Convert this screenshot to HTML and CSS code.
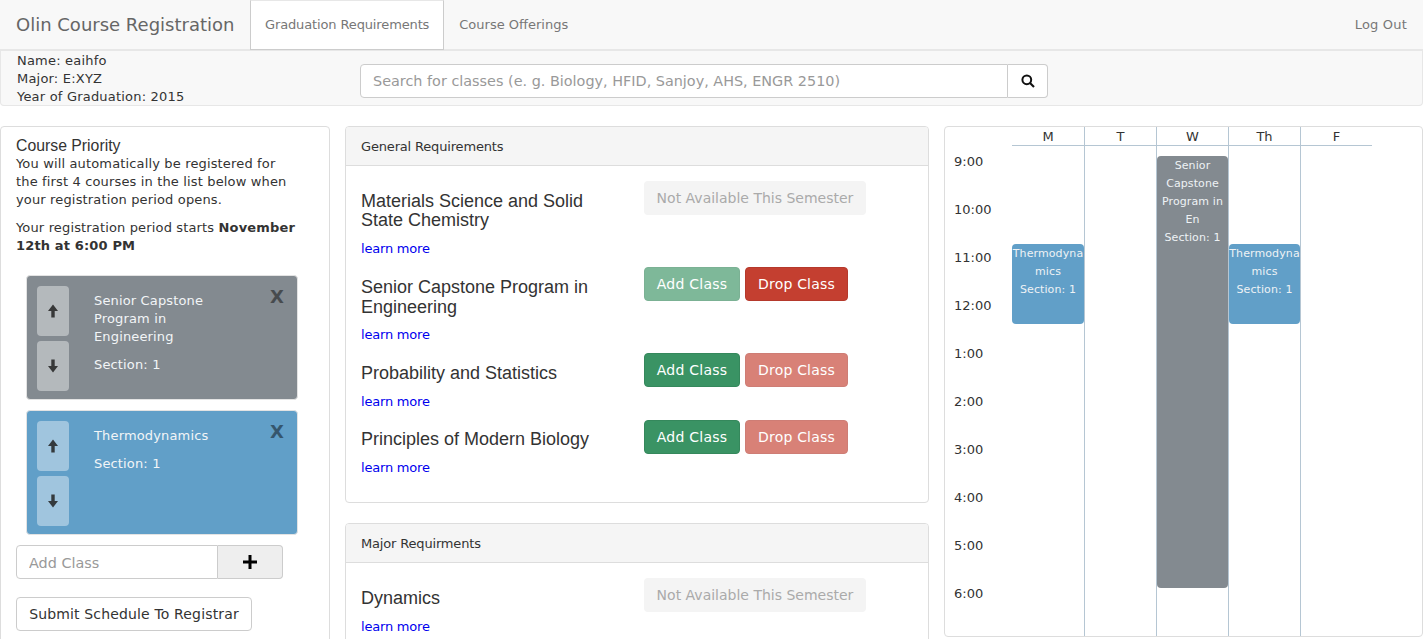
FILE: index.html
```html
<!DOCTYPE html>
<html lang="en">
<head>
    <meta charset="UTF-8">
    <meta name="viewport" content="width=device-width, initial-scale=1.0">
    <title>Olin Course Registration</title>
    <link rel="stylesheet" href="styles.css">
</head>
<body>
    <nav class="navbar">
        <span class="brand">Olin Course Registration</span>
        <a class="nav-link active">Graduation Requirements</a>
        <a class="nav-link">Course Offerings</a>
        <a class="nav-link logout">Log Out</a>
    </nav>

    <div class="info-bar">
        <div class="student">
            <div>Name: eaihfo</div>
            <div>Major: E:XYZ</div>
            <div>Year of Graduation: 2015</div>
        </div>
        <div class="search">
            <input class="search-input" placeholder="Search for classes (e. g. Biology, HFID, Sanjoy, AHS, ENGR 2510)">
            <button class="search-btn">
                <svg width="14" height="14" viewBox="0 0 14 14"><circle cx="5.8" cy="5.8" r="4.4" fill="none" stroke="#111" stroke-width="2"/><path d="M9 9l4 4" stroke="#111" stroke-width="2.2"/></svg>
            </button>
        </div>
    </div>

    <div class="main">
        <section class="panel priority">
            <h3>Course Priority</h3>
            <p>You will automatically be registered for the first 4 courses in the list below when your registration period opens.</p>
            <p>Your registration period starts <b>November 12th at 6:00 PM</b></p>

            <div class="course-card gray">
                <div class="move-btns">
                    <button class="move-btn"><svg width="12" height="14" viewBox="0 0 12 14"><path d="M6 .5L11 7H7.700v6.500H4.300V7H1z"/></svg></button>
                    <button class="move-btn"><svg width="12" height="14" viewBox="0 0 12 14"><path d="M6 13.500L1 7h3.300V.5h3.400V7H11z"/></svg></button>
                </div>
                <div class="course-text">
                    <p>Senior Capstone Program in Engineering</p>
                    <p>Section: 1</p>
                </div>
                <span class="close">X</span>
            </div>

            <div class="course-card blue">
                <div class="move-btns">
                    <button class="move-btn"><svg width="12" height="14" viewBox="0 0 12 14"><path d="M6 .5L11 7H7.700v6.500H4.300V7H1z"/></svg></button>
                    <button class="move-btn"><svg width="12" height="14" viewBox="0 0 12 14"><path d="M6 13.500L1 7h3.300V.5h3.400V7H11z"/></svg></button>
                </div>
                <div class="course-text">
                    <p>Thermodynamics</p>
                    <p>Section: 1</p>
                </div>
                <span class="close">X</span>
            </div>

            <div class="add-class">
                <input class="add-input" placeholder="Add Class">
                <span class="add-addon"><svg width="14" height="14" viewBox="0 0 14 14"><path d="M5.500 0h3v5.500H14v3H8.500V14h-3V8.500H0v-3h5.500z"/></svg></span>
            </div>
            <button class="btn submit">Submit Schedule To Registrar</button>
        </section>

        <div class="requirements">
            <section class="panel req-panel">
                <div class="panel-heading">General Requirements</div>
                <div class="panel-body">
                    <div class="req-row">
                        <div class="req-info">
                            <h4>Materials Science and Solid State Chemistry</h4>
                            <a class="learn">learn more</a>
                        </div>
                        <div class="req-actions"><button class="btn na">Not Available This Semester</button></div>
                    </div>
                    <div class="req-row">
                        <div class="req-info">
                            <h4>Senior Capstone Program in Engineering</h4>
                            <a class="learn">learn more</a>
                        </div>
                        <div class="req-actions">
                            <button class="btn add faded">Add Class</button>
                            <button class="btn drop">Drop Class</button>
                        </div>
                    </div>
                    <div class="req-row">
                        <div class="req-info">
                            <h4>Probability and Statistics</h4>
                            <a class="learn">learn more</a>
                        </div>
                        <div class="req-actions">
                            <button class="btn add">Add Class</button>
                            <button class="btn drop faded">Drop Class</button>
                        </div>
                    </div>
                    <div class="req-row">
                        <div class="req-info">
                            <h4>Principles of Modern Biology</h4>
                            <a class="learn">learn more</a>
                        </div>
                        <div class="req-actions">
                            <button class="btn add">Add Class</button>
                            <button class="btn drop faded">Drop Class</button>
                        </div>
                    </div>
                </div>
            </section>

            <section class="panel req-panel">
                <div class="panel-heading">Major Requirments</div>
                <div class="panel-body">
                    <div class="req-row">
                        <div class="req-info">
                            <h4>Dynamics</h4>
                            <a class="learn">learn more</a>
                        </div>
                        <div class="req-actions"><button class="btn na">Not Available This Semester</button></div>
                    </div>
                </div>
            </section>
        </div>

        <section class="panel calendar">
            <div class="times">
                <div>9:00</div>
                <div>10:00</div>
                <div>11:00</div>
                <div>12:00</div>
                <div>1:00</div>
                <div>2:00</div>
                <div>3:00</div>
                <div>4:00</div>
                <div>5:00</div>
                <div>6:00</div>
            </div>
            <div class="day">
                <div class="day-name">M</div>
                <div class="event blue ev-thermo">Thermodynamics<br>Section: 1</div>
            </div>
            <div class="day">
                <div class="day-name">T</div>
            </div>
            <div class="day">
                <div class="day-name">W</div>
                <div class="event gray ev-capstone">Senior Capstone Program in En<br>Section: 1</div>
            </div>
            <div class="day">
                <div class="day-name">Th</div>
                <div class="event blue ev-thermo">Thermodynamics<br>Section: 1</div>
            </div>
            <div class="day last">
                <div class="day-name">F</div>
            </div>
        </section>
    </div>
</body>
</html>
```

FILE: styles.css
```css
* {
    box-sizing: border-box;
}
html, body {
    height: 100vh;
    overflow: hidden;
}
body {
    margin: 0;
    font-family: "DejaVu Sans", Verdana, sans-serif;
    font-size: 13px;
    line-height: 18px;
    color: #333;
    background-color: #fff;
}
p {
    margin: 0 0 10px;
}
button, input {
    font-family: inherit;
}

/* top bar */
.navbar {
    display: flex;
    height: 51px;
    background-color: #f8f8f8;
    border-bottom: 2px solid #e7e7e7;
}
.brand {
    padding: 0 15px 0 16px;
    font-size: 18px;
    line-height: 49px;
    color: #666;
    width: 250px;
    white-space: nowrap;
}
.nav-link {
    padding: 0 15px;
    line-height: 49px;
    color: #777;
}
.nav-link.active {
    height: 50px;
    padding: 0 14px;
    background-color: #fff;
    border: 1px solid #ccc;
    border-top-color: #e7e7e7;
    line-height: 47px;
    letter-spacing: -0.13px;
}
.logout {
    margin-left: auto;
    padding-right: 16px;
    letter-spacing: 0.2px;
}

.info-bar {
    display: flex;
    height: 55px;
    background-color: #f8f8f8;
    border: 1px solid #e7e7e7;
    border-top: 0;
    border-radius: 0 0 4px 4px;
}
.student {
    width: 359px;
    padding: 1px 0 0 16px;
    letter-spacing: 0.2px;
    white-space: nowrap;
}
.search {
    display: flex;
    width: 688px;
    height: 34px;
    margin-top: 13px;
}
.search-input {
    flex: 1;
    padding: 0 12px;
    font-size: 14.4px;
    color: #555;
    border: 1px solid #ccc;
    border-radius: 4px 0 0 4px;
    background-color: #fff;
}
.search-input::placeholder, .add-input::placeholder {
    color: #999;
    opacity: 1;
}
.search-btn {
    display: flex;
    align-items: center;
    justify-content: center;
    width: 40px;
    padding: 0;
    border: 1px solid #ccc;
    border-left: 0;
    border-radius: 0 4px 4px 0;
    background-color: #fff;
}

/* main columns */
.main {
    display: flex;
    gap: 15px;
    padding: 20px 0 0;
}
.panel {
    background-color: #fff;
    border: 1px solid #ddd;
    border-radius: 4px;
}

.priority {
    flex: none;
    width: 330px;
    height: 560px;
    padding: 10px 15px 0;
    letter-spacing: 0.15px;
}
.priority h3 {
    margin: 0;
    font-family: "Liberation Sans", Arial, sans-serif;
    font-size: 15.8px;
    font-weight: normal;
    line-height: 18px;
    letter-spacing: 0;
}
.priority > p {
    width: 280px;
}
.course-card {
    display: flex;
    width: 272px;
    height: 125px;
    margin: 0 0 10px 10px;
    padding: 10px 9px;
    border-radius: 4px;
    border: 1px solid #e3e3e3;
    color: #f2f5f7;
    position: relative;
}
.priority > p + .course-card {
    margin-top: 20px;
}
.gray {
    background-color: #838a90;
}
.blue {
    background-color: #619fc8;
}
.move-btns {
    display: flex;
    flex-direction: column;
    gap: 5px;
    flex: none;
    width: 32px;
    margin-left: 1px;
}
.move-btn {
    flex: none;
    display: flex;
    align-items: center;
    justify-content: center;
    height: 50px;
    padding: 0;
    border: 0;
    border-radius: 4px;
    background-color: rgba(255,255,255,0.4);
}
.move-btn svg {
    fill: #222;
    opacity: 0.85;
}
.course-text {
    width: 130px;
    margin-left: 25px;
    padding-top: 6px;
}
.close {
    position: absolute;
    top: 12px;
    right: 13px;
    font-size: 18px;
    font-weight: bold;
    letter-spacing: 0;
    color: #000;
    opacity: 0.45;
}
.add-class {
    display: flex;
    width: 267px;
    height: 34px;
}
.add-input {
    flex: 1;
    min-width: 0;
    padding: 2px 12px 0;
    font-size: 14.4px;
    border: 1px solid #ccc;
    border-radius: 4px 0 0 4px;
}
.add-addon {
    display: flex;
    align-items: center;
    justify-content: center;
    width: 65px;
    background-color: #eee;
    border: 1px solid #ccc;
    border-left: 0;
    border-radius: 0 4px 4px 0;
}
.btn {
    height: 34px;
    padding: 0 12px;
    font-size: 14px;
    border: 1px solid transparent;
    border-radius: 4px;
    white-space: nowrap;
}
.submit {
    display: block;
    width: 236px;
    margin-top: 18px;
    padding: 0;
    letter-spacing: 0.15px;
    color: #333;
    background-color: #fff;
    border-color: #ccc;
}

/* requirements */
.requirements {
    flex: none;
    width: 584px;
}
.req-panel {
    margin-bottom: 20px;
}
.panel-heading {
    height: 39px;
    padding: 0 15px;
    line-height: 40px;
    letter-spacing: -0.17px;
    background-color: #f5f5f5;
    border-bottom: 1px solid #ddd;
    border-radius: 3px 3px 0 0;
}
.panel-body {
    padding: 15px 15px 16px;
}
.req-row {
    display: flex;
    margin-bottom: 9px;
}
.req-info {
    flex: none;
    width: 283px;
    padding-right: 30px;
}
.req-info h4 {
    margin: 10.6px 0 9px;
    font-family: "Liberation Sans", Arial, sans-serif;
    font-size: 18px;
    font-weight: normal;
    line-height: 19.8px;
    color: #333;
}
.learn {
    display: block;
    letter-spacing: -0.2px;
    color: #0000ee;
}
.req-actions {
    display: flex;
    gap: 5px;
    align-items: flex-start;
}
.na {
    width: 222px;
    padding: 0;
    color: #aaa;
    background-color: #f4f4f4;
}
.add {
    width: 96px;
    padding: 0;
    letter-spacing: 0.25px;
    color: #fff;
    background-color: #3a9364;
    border-color: #35885c;
}
.drop {
    width: 103px;
    padding: 0;
    letter-spacing: 0.2px;
    color: #fff;
    background-color: #c43f30;
    border-color: #b5392c;
}
.faded {
    opacity: 0.65;
}

/* calendar */
.calendar {
    flex: none;
    display: flex;
    width: 479px;
    height: 511px;
}
.times {
    flex: none;
    width: 67px;
    padding: 26px 0 0 9px;
}
.times div {
    height: 48px;
}
.day {
    flex: none;
    width: 72px;
    border-right: 1px solid #b5c6d3;
    position: relative;
}
.times + .day {
    width: 73px;
}
.day.last {
    width: 71px;
    border-right: 0;
}
.day-name {
    height: 19px;
    line-height: 20px;
    text-align: center;
    border-bottom: 1px solid #b5c6d3;
}
.event {
    position: absolute;
    top: 29px;
    left: 0;
    right: 0;
    padding: 1px 0 0;
    font-size: 11px;
    letter-spacing: 0.1px;
    text-align: center;
    color: #eef2f5;
    border-radius: 4px;
    overflow-wrap: anywhere;
}
.ev-thermo {
    top: 117px;
    height: 80px;
}
.ev-capstone {
    height: 432px;
    padding: 1px 2px 0;
}
```
